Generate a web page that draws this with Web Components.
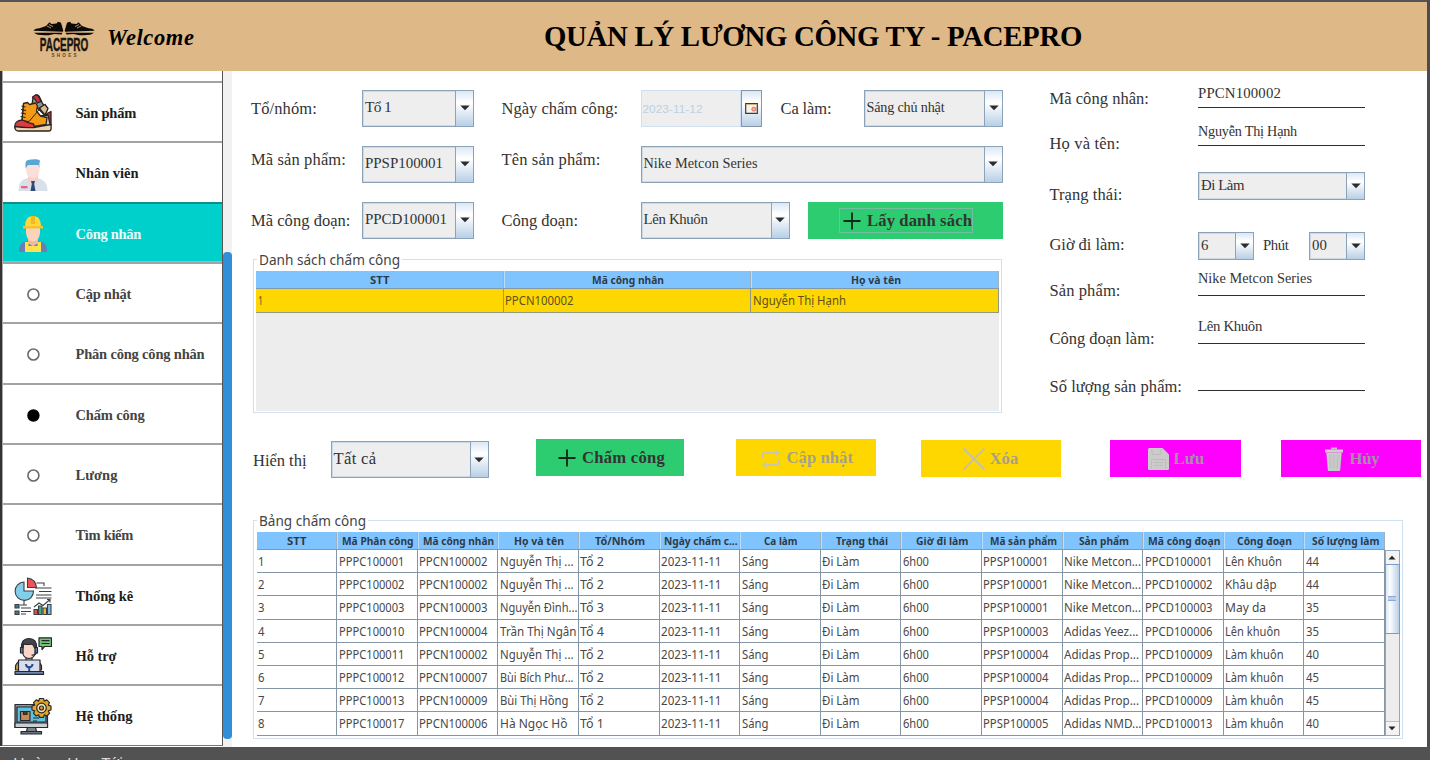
<!DOCTYPE html>
<html lang="vi">
<head>
<meta charset="utf-8">
<title>Quản lý lương công ty - PacePro</title>
<style>
  html, body { margin: 0; height: 100%; overflow: hidden; background: #4c4c4e; }
  body { font-family: "Liberation Serif", "Times New Roman", serif; color: #333; }
</style>
</head>
<body>
<pp-app></pp-app>
<script>
const METRICS = {
  serif: { family: '"Liberation Serif", "Times New Roman", serif', a: .891, d: .216 },
  sans: { family: '"Noto Sans", "Open Sans", sans-serif', a: 1.069, d: .293 },
  arial: { family: '"Liberation Sans", Arial, sans-serif', a: .905, d: .212 }
};

/* Single line of text: s = size, w = measured width, by = baseline below the container's top. */
class FitText extends HTMLElement {
  connectedCallback() {
    if (this.shadowRoot) return;
    const f = this.getAttribute('f') || 'serif', m = METRICS[f];
    const s = parseFloat(this.getAttribute('s') || 16.5);
    const w = parseFloat(this.getAttribute('w') || 0);
    const by = this.getAttribute('by');
    const weight = this.getAttribute('wt') || 400;
    const A = Math.round(m.a * s), D = Math.round(m.d * s), L = A + D;
    this.attachShadow({ mode: 'open' }).innerHTML = `<style>
      :host { display: block; flex: none; height: ${L}px; ${by ? `margin-top: ${Math.round(parseFloat(by) - A)}px;` : ''} }
      span { display: inline-block; white-space: pre; vertical-align: top; transform-origin: 0 50%;
        font: ${this.hasAttribute('it') ? 'italic' : 'normal'} ${weight} ${s}px/${L}px ${m.family}; }
    </style><span><slot></slot></span>`;
    if (!w) return;
    const span = this.shadowRoot.querySelector('span');
    const nat = span.getBoundingClientRect().width;
    this.style.width = w + 'px';
    if (!nat) return;
    if (f === 'sans') span.style.transform = `scaleX(${w / nat})`;
    else span.style.letterSpacing = (w - nat) / Math.max(1, this.textContent.length) + 'px';
  }
}
customElements.define('fit-text', FitText);

/* Swing-like combo box. */
class PpCombo extends HTMLElement {
  connectedCallback() {
    if (this.shadowRoot) return;
    const g = n => this.getAttribute(n);
    this.attachShadow({ mode: 'open' }).innerHTML = `<style>
      :host { display: flex; flex: none; box-sizing: border-box; width: ${g('w')}px; height: ${g('h') || 37}px;
        border: 1px solid #8ba2b8; background: #eee; box-shadow: inset 0 0 0 1px #ccd9e6; }
      .v { flex: 1; display: flex; padding-left: 2px; min-width: 0; }
      .b { width: 17px; border-left: 1px solid #8ba2b8; display: flex; align-items: center; justify-content: center;
        background: linear-gradient(#dbe7f4, #fff 32%, #f4f8fc 45%, #b8cfe5); }
    </style>
    <div class="v"><fit-text by="${g('by')}" s="${g('s')}" w="${g('tw')}">${this.textContent}</fit-text></div>
    <div class="b"><svg width="10" height="6" viewBox="0 0 10 6"><path d="M.3.6h9.4L5 5.3z" fill="#2c2c2c"/></svg></div>`;
  }
}
customElements.define('pp-combo', PpCombo);

const GLYPHS = {
  plus: '<svg width="18" height="18" viewBox="0 0 18 18"><path d="M9 .5v17M.5 9h17" stroke="#12261a" stroke-width="1.8"/></svg>',
  loop: '<svg width="20" height="20" viewBox="0 0 20 20" fill="none" stroke="#c9c6b0" stroke-width="2.100"><path d="M2 9.500V5q0-1 1-1h14M18 10.500v4.500q0 1-1 1H3"/><path d="M14.500.500 18.800 4l-4.300 3.500zM5.500 12.500 1.200 16l4.300 3.500z" fill="#c9c6b0" stroke="none"/></svg>',
  cross: '<svg width="24" height="24" viewBox="0 0 24 24"><path d="M1.500 1.500 22.500 22.500M22.500 1.500 1.500 22.500" stroke="#c6c0a8" stroke-width="2"/></svg>',
  save: '<svg width="21" height="22" viewBox="0 0 21 22"><path d="M1.500 0H14.500L21 6.500V20.500Q21 22 19.500 22H1.500Q0 22 0 20.500V1.500Q0 0 1.500 0Z" fill="#cbcbcb"/><path d="M4 1v5.500h9V1M3.500 21v-9.500h14V21M6 14.500h9M6 17.500h9" fill="none" stroke="#bdb6bd" stroke-width=".8"/></svg>',
  bin: '<svg width="18" height="24" viewBox="0 0 18 24"><path d="M6 1.500h6" stroke="#c5bdc5" stroke-width="2"/><path d="M0 2.500h18v3H0z" fill="#cfcfcf"/><path d="M1.300 5.500h15.400L15.200 23q-.1 1-1 1H3.800q-.9 0-1-1z" fill="#c9c9c9"/><path d="M5 8l.7 13M9 8v13M13 8l-.7 13" stroke="#bdb6bd" stroke-width=".8"/></svg>'
};

/* Flat button: width, background, glyph, text; px/gap give the inner left padding and icon gap. */
class PpButton extends HTMLElement {
  connectedCallback() {
    if (this.shadowRoot) return;
    const g = n => this.getAttribute(n);
    this.attachShadow({ mode: 'open' }).innerHTML = `<style>
      :host { display: flex; flex: none; box-sizing: border-box; width: ${g('w')}px; height: 37px; background: ${g('bg')};
        padding-left: ${g('px')}px; color: ${g('fg') || '#333'}; align-items: flex-start; }
      svg { display: block; flex: none; margin: ${g('iy')}px ${g('gap')}px 0 0; }
      .in { display: flex; ${this.hasAttribute('focus') ? 'margin: 6px 0 0 0; height: 25px; width: 134px; box-sizing: border-box; border: 1px solid #6fbfa0; padding-left: 3px;' : ''} }
    </style><div class="in">${GLYPHS[g('icon')]}<fit-text wt="700" s="16.600" w="${g('tw')}" by="${g('by') || 24}">${this.textContent}</fit-text></div>`;
  }
}
customElements.define('pp-button', PpButton);

/* Titled group box. */
class PpGroup extends HTMLElement {
  connectedCallback() {
    if (this.shadowRoot) return;
    const g = n => this.getAttribute(n);
    this.attachShadow({ mode: 'open' }).innerHTML = `<style>
      :host { display: block; position: relative; box-sizing: border-box; width: ${g('w')}px; height: ${g('h')}px;
        border: 1px solid #cfe0f0; padding: ${g('pad')}; }
      .t { position: absolute; left: 3px; top: -10px; background: #fff; padding: 0 2px; height: 19px; color: #444; }
    </style><div class="t"><fit-text f="sans" s="14" w="${g('tw')}">${g('label')}</fit-text></div><slot></slot>`;
  }
}
customElements.define('pp-group', PpGroup);

/* Grid of cells; columns arrive as [title, width], rows as [text, width]. */
class PpTable extends HTMLElement {
  connectedCallback() {
    if (this.shadowRoot) return;
    const d = DATA[this.getAttribute('data')];
    const cols = `grid-template-columns: repeat(${d.head.length}, minmax(0, 1fr));`;
    this.attachShadow({ mode: 'open' }).innerHTML = `<style>
      :host { display: block; width: ${d.width}px; }
      .h { display: grid; ${cols} height: 18px; background: #80c4ff; border-bottom: 1px solid #8298ab; box-sizing: border-box; }
      .h > div { display: flex; justify-content: center; padding-left: 1.500px; border-right: 1px solid #9fb0bf; border-left: 1px solid #b9defc; color: #2d3b48; min-width: 0; }
      .h > div:first-child { border-left: 0; }
      .r { display: grid; ${cols} height: ${d.rowH}px; box-sizing: border-box; background: ${d.bg}; }
      .r > div { display: flex; border-right: 1px solid ${d.line}; border-bottom: 1px solid ${d.line}; padding-left: 1.500px; min-width: 0; color: ${d.fg}; }
    </style>
    <div class="h">${d.head.map(([t, w], i) => `<div><fit-text f="sans" wt="700" s="11.200" by="13" w="${w}">${t}</fit-text></div>`).join('')}</div>
    ${d.rows.map(r => `<div class="r">${r.map(([t, w]) => `<div><fit-text f="sans" s="12" by="16" w="${w}">${t}</fit-text></div>`).join('')}</div>`).join('')}`;
  }
}
const row = (n, pc, cn, name, nw, to, sp, sn, sw, cd, cong, cw, q) => [[n, 6.5], ['PPPC' + pc, 65.5], ['PPCN' + cn, 68.5], [name, nw], ['Tổ ' + to, 24],
  ['2023-11-11', 60.5], ['Sáng', 26.5], ['Đi Làm', 37.5], ['6h00', 26], ['PPSP' + sp, 65.5], [sn, sw], ['PPCD' + cd, 67.5], [cong, cw], [q, 13]];
const DATA = {
  list: { width: 743, rowH: 23.5, bg: '#ffd700', line: '#8f9a80', fg: '#5c5220',
    head: [['STT', 19.5], ['Mã công nhân', 72], ['Họ và tên', 50]],
    rows: [[['1', 5], ['PPCN100002', 68.5], ['Nguyễn Thị Hạnh', 93]]] },
  board: { width: 1128.5, rowH: 23.19, bg: '#fff', line: '#8596a6', fg: '#484848',
    head: [['STT', 19.5], ['Mã Phân công', 71.5], ['Mã công nhân', 71], ['Họ và tên', 50], ['Tổ/Nhóm', 50], ['Ngày chấm c...', 73.5], ['Ca làm', 33.5], ['Trạng thái', 52],
      ['Giờ đi làm', 52.5], ['Mã sản phẩm', 67], ['Sản phẩm', 50], ['Mã công đoạn', 72.5], ['Công đoạn', 55], ['Số lượng làm', 67.5]],
    rows: [
      row('1', '100001', '100002', 'Nguyễn Thị ...', 73.5, 2, '100001', 'Nike Metcon...', 77, '100001', 'Lên Khuôn', 57, '44'),
      row('2', '100002', '100002', 'Nguyễn Thị ...', 73.5, 2, '100001', 'Nike Metcon...', 77, '100002', 'Khâu dập', 51.5, '44'),
      row('3', '100003', '100003', 'Nguyễn Đình...', 77.5, 3, '100001', 'Nike Metcon...', 77, '100003', 'May da', 41, '35'),
      row('4', '100010', '100004', 'Trần Thị Ngân', 76.5, 4, '100003', 'Adidas Yeez...', 74.5, '100006', 'Lên khuôn', 55, '35'),
      row('5', '100011', '100002', 'Nguyễn Thị ...', 73.5, 2, '100004', 'Adidas Prop...', 75, '100009', 'Làm khuôn', 58.5, '40'),
      row('6', '100012', '100007', 'Bùi Bích Phư...', 73.5, 2, '100004', 'Adidas Prop...', 75, '100009', 'Làm khuôn', 58.5, '45'),
      row('7', '100013', '100009', 'Bùi Thị Hồng', 68.5, 2, '100004', 'Adidas Prop...', 75, '100009', 'Làm khuôn', 58.5, '45'),
      row('8', '100017', '100006', 'Hà Ngọc Hồ', 67.5, 1, '100005', 'Adidas NMD...', 77.5, '100013', 'Làm khuôn', 58.5, '40')
    ] }
};
customElements.define('pp-table', PpTable);

const ICONS = {
  shoes: `<svg width="38" height="38" viewBox="0 0 38 38" stroke="#2b2420" stroke-width="1.300" stroke-linejoin="round">
    <path d="M19 3.500 22.500.8q2.500 0 3.500 3.200l2.500 5.500L33.500 15l-3 6-7-7-5.500-3.500z" fill="#8f9298"/><path d="M18.500 3 22 .8q2.500 0 3.500 3.200l1.500 3.500-3.500 1.500q-2-4-5-6z" fill="#cc2f3c"/>
    <path d="M25 14l6-3.500 3 4-3 6.500z" fill="#d8bd95"/>
    <path d="M33 19.500l4-2v13l-8 2z" fill="#c62f3b"/><path d="M26 22l8-1 2.500 11-9 1z" fill="#c6cad0"/>
    <path d="M9.500 9.500l4-1 2 2 6-1.500 2 3-1 5 4 5 6.500 1.500-1 7-12 2L8 26.500z" fill="#f59a14"/>
    <path d="M9.500 9.500 8 26.500l7 1 12-14" fill="none" stroke-width="1"/>
    <path d="M7.500 12l4 1M7 15.500l5 1M7 19l5 1M6.500 22.500l5 1" stroke-width="1.200"/>
    <path d="M1 33.500q-1-7 7.500-7.500 5 3 11 4l1.500 4.500z" fill="#e0393f"/>
    <path d="M.8 32.500q9 1.500 19 1l8-1.500 9.300-1.500v4q0 2.500-2.500 2.500H4.500q-3.700 0-3.700-4.500z" fill="#ecd3b2"/></svg>`,
  staff: `<svg width="38" height="38" viewBox="0 0 38 38"><path d="M4.500 37q0-9 5-11.500l9-3 9 3q6 2.500 6 11.500z" fill="#d9e0ec"/><path d="M14 20h10v7l-5 3-5-3z" fill="#f6cfc8"/>
    <path d="M12 10q0-5 7-5t6.500 5v6q-.5 8-6.500 8.500Q12.500 24 12 16z" fill="#fbe0da"/>
    <path d="M11.500 14.500V9Q12 5.800 16 5.800q9-1.500 10 1-1.300 3-.5 7.500L24.500 11H14z" fill="#58a6d3"/>
    <path d="M17 27h4l-.8 3 1.300 7h-5l1.300-7z" fill="#2f4a72"/><path d="M7 32h6.500v2.300H7z" fill="#e8677b"/></svg>`,
  worker: `<svg width="38" height="38" viewBox="0 0 38 38"><path d="M5 37q0-9 5-10l9-3 9 3q5 1 5 10z" fill="#6b7db5"/><path d="M14 22h10v6l-5 3.500-5-3.500z" fill="#f0b99c"/>
    <path d="M12 12h14v6q-1 8-7 8.500-6-.5-7-8.500z" fill="#fbd3bb"/><path d="M11 27h3.500v4h9v-4H27v10H11z" fill="#ffe04d"/>
    <path d="M11 11Q11 2.500 17 1.200h4Q27 2.500 27 11z" fill="#ffd738"/><path d="M17 1h4v8h-4z" fill="#f5b722"/><path d="M9 11h20v2.500H9z" fill="#f7c12d"/></svg>`,
  ring: `<svg width="38" height="38" viewBox="0 0 38 38"><circle cx="19.400" cy="19.500" r="5.500" fill="#fff" stroke="#6a6a6a" stroke-width="1.600"/></svg>`,
  dot: `<svg width="38" height="38" viewBox="0 0 38 38"><circle cx="19.400" cy="19.500" r="6.200" fill="#000"/></svg>`,
  stats: `<svg width="38" height="38" viewBox="0 0 38 38" stroke="#3c3f45" stroke-width="1.100"><path d="M10 5v9h9.500A9.200 9.200 0 1 1 10 5z" fill="#83cfea"/><path d="M13.500 1q8 1 9 9.500h-9z" fill="#f0525a"/>
    <path d="M22.500 6H30v3M21 11h16.500M25 14.500h12.500M22 18h15.500M22 21h15.500M7 28h6M10 23.500V28h-4M7 31h10M7 34.500h10M7 37h5M20 30l5-4 4 2.500 6.500-5.500M33 22.500h3v3" fill="none"/>
    <path d="M1 27.500h4v3.500H1zM1 34h4v3.500H1z" fill="#417a86"/><path d="M20 32.500h3.500v5H20z" fill="#e2505c"/><path d="M24.500 29h3.500v8.500h-3.500z" fill="#37b67a"/><path d="M29 31h3.500v6.500H29z" fill="#e9b83d"/><path d="M33.500 27.500H37v10h-3.500z" fill="#79bfe3"/></svg>`,
  support: `<svg width="38" height="38" viewBox="0 0 38 38" stroke="#25262b" stroke-width="1.200" stroke-linejoin="round"><path d="M1.500 33v-4q1-4 6-5.500h14q5 1.500 6 5.500v4z" fill="#d99c3d"/><path d="M12 19h6v5l-3 2-3-2z" fill="#efb9a4"/>
    <path d="M8.500 9q1-4 6.500-4t6.500 4v6q-1 6.500-6.500 6.500T8.500 15z" fill="#fbd6c7"/><path d="M7.500 11Q7 1.500 15 1.500T22.500 11h-2q-.5-3-3-4-4 1-8 0L9 11z" fill="#45464c"/>
    <path d="M6.500 10.500h2.500v5.500H6.500zM21 10.500h2.500v5.500H21z" fill="#4f86b8"/><path d="M22.500 16q-1 2.500-5 2" fill="none"/>
    <path d="M4.500 23h21.500v12H4.500z" fill="#d7ddee"/><path d="M1 34.500h28.500v2.800H1z" fill="#6e87b4"/><path d="M12 27q0 3 3 3.500 3.500-.5 3.500-3.500M15.200 29v5" fill="none" stroke="#2f4c88" stroke-width="2"/>
    <path d="M25 .800h12.500v8.700H30.500l-2.500 3v-3H25z" fill="#74c27a"/><path d="M27.500 3.700h8M27.500 6.500h8" fill="none"/></svg>`,
  system: `<svg width="38" height="38" viewBox="0 0 38 38" stroke="#26292f" stroke-width="1.200" stroke-linejoin="round"><path d="M1 7.500h32.500v23H1z" fill="#8c959e"/><path d="M3 10h29v15H3z" fill="#5bc2df"/><path d="M1 26h32.500v4.500H1z" fill="#c9ced4"/>
    <path d="M6.500 14.500h9.500v9H6.500z" fill="#c58a58"/><path d="M9.500 14.500h3.500v3H9.500z" fill="#5b3a26"/><path d="M19 21h6M19 24h4" stroke-width="1"/>
    <path d="M13.500 30.500h8l1 4h-10z" fill="#7b848d"/><path d="M7 34.500h20.500V37H7z" fill="#6a727b"/>
    <path d="M25.500 1.500h4l.8 2.600 2.500-1.200 2.700 2.700-1.200 2.500 2.700.9v4l-2.700.8 1.200 2.500-2.700 2.700-2.500-1.200-.8 2.600h-4l-.8-2.600-2.500 1.200-2.700-2.700 1.200-2.500-2.700-.8V9l2.700-.9-1.200-2.500 2.700-2.700 2.500 1.200z" fill="#e5a524"/><circle cx="27.500" cy="11" r="4.800" fill="#f6e0ae"/><circle cx="27.500" cy="11" r="2" fill="#e5a524"/></svg>`
};

class PpItem extends HTMLElement {
  connectedCallback() {
    if (this.shadowRoot) return;
    const on = this.hasAttribute('active'), sub = this.hasAttribute('sub');
    this.attachShadow({ mode: 'open' }).innerHTML = `<style>
      :host { display: flex; box-sizing: border-box; height: 60.33px; flex: none; border-top: 2px solid ${on ? '#0a8f8c' : '#a3a3a3'};
        background: ${on ? '#00d0cb' : '#fff'}; color: ${on ? '#e9fdfc' : sub ? '#444' : '#1c1c1c'}; ${on ? 'box-shadow: inset 0 -1px #00fffb;' : ''} }
      svg { flex: none; display: block; margin: 11px 24px 0 10.500px; }
    </style>${ICONS[this.getAttribute('icon')]}<fit-text wt="700" s="14.500" by="35" w="${this.getAttribute('tw')}">${this.textContent}</fit-text>`;
  }
}
customElements.define('pp-item', PpItem);

class PpSidebar extends HTMLElement {
  constructor() {
    super();
    this.attachShadow({ mode: 'open' }).innerHTML = `<style>
      :host { display: flex; width: 232px; flex: none; background: #fff; }
      nav { width: 220.500px; height: 675px; box-sizing: border-box; border-left: 1px solid #aaa; border-right: 1px solid #555; border-bottom: 1px solid #777;
        margin-left: 2px; padding-top: 10px; overflow: hidden; display: flex; flex-direction: column; box-shadow: -2px 0 #333; }
      .track { width: 9px; margin-left: .500px; background: #f1f1f1; padding-top: 181px; box-sizing: border-box; }
      .thumb { height: 486.500px; border-radius: 4px; background: #2f8fd9; }
    </style>
    <nav>
      <pp-item icon="shoes" tw="60.500">Sản phẩm</pp-item>
      <pp-item icon="staff" tw="63">Nhân viên</pp-item>
      <pp-item icon="worker" tw="65.500" active>Công nhân</pp-item>
      <pp-item icon="ring" tw="55.500" sub>Cập nhật</pp-item>
      <pp-item icon="ring" tw="129" sub>Phân công công nhân</pp-item>
      <pp-item icon="dot" tw="69" sub>Chấm công</pp-item>
      <pp-item icon="ring" tw="42" sub>Lương</pp-item>
      <pp-item icon="ring" tw="57.500" sub>Tìm kiếm</pp-item>
      <pp-item icon="stats" tw="57.500">Thống kê</pp-item>
      <pp-item icon="support" tw="41">Hỗ trợ</pp-item>
      <pp-item icon="system" tw="57">Hệ thống</pp-item>
    </nav>
    <div class="track"><div class="thumb"></div></div>`;
  }
}
customElements.define('pp-sidebar', PpSidebar);

class PpHeader extends HTMLElement {
  constructor() {
    super();
    this.attachShadow({ mode: 'open' }).innerHTML = `<style>
      :host { display: flex; height: 69px; flex: none; background: #deb887; color: #000; }
      .logo { flex: none; margin: 19px 12px 0 33px; display: block; }
    </style>
    <svg class="logo" width="62" height="37" viewBox="0 0 62 37">
      <path id="s" d="M.5 9.800q1-2.300 6-2.600L13 5l3.500-3.700 2 1.700 5-.5 1.500-1.700 3 1 1.800 6.200q.8 1 .2 2.800z" fill="#0c0a08"/>
      <path d="M61.500 9.800q-1-2.300-6-2.600L49 5l-3.500-3.700-2 1.700-5-.5L37 .800l-3 1-1.800 6.200q-.8 1-.2 2.800z" fill="#0c0a08"/>
      <path d="M1 11.800h28.500l-1 1.800-7-.6-6 1.200Q4 14.800 1 11.800zM61 11.800H32.500l1 1.800 7-.6 6 1.200q11.500.6 14.500-2.400z" fill="#0c0a08"/>
      <path d="M14 5l4 2M16 3.600l4 2M48 5l-4 2M46 3.600l-4 2" stroke="#deb887" stroke-width=".8"/>
      <text x="6.800" y="30.300" font-family="Liberation Sans" font-weight="700" font-size="19" fill="#1a150f" stroke="#1a150f" stroke-width=".5" textLength="48.500" lengthAdjust="spacingAndGlyphs">PACEPRO</text>
      <text x="18.500" y="36.300" font-family="Liberation Sans" font-weight="700" font-size="4.600" fill="#5a4528" textLength="25">SHOES</text>
    </svg>
    <fit-text it wt="700" s="22.500" w="87.500" by="43">Welcome</fit-text>
    <div style="width:349.500px;flex:none"></div>
    <fit-text wt="700" s="28.800" w="538" by="43.600">QUẢN LÝ LƯƠNG CÔNG TY - PACEPRO</fit-text>`;
  }
}
customElements.define('pp-header', PpHeader);

class PpDate extends HTMLElement {
  constructor() {
    super();
    this.attachShadow({ mode: 'open' }).innerHTML = `<style>
      :host { display: flex; flex: none; width: 121px; height: 37px; }
      .v { box-sizing: border-box; width: 100px; border: 1px solid #cddff0; background: #eee; display: flex; padding-left: 1px; color: #bcd0e4; }
      .b { box-sizing: border-box; width: 21px; border: 1px solid #8496a8; background: linear-gradient(#dbe7f4, #fff 32%, #f4f8fc 45%, #b8cfe5); display: flex; align-items: center; justify-content: center; }
    </style><div class="v"><fit-text f="arial" s="11.800" w="60" by="22">2023-11-12</fit-text></div>
    <div class="b"><svg width="13" height="11" viewBox="0 0 13 11"><path d="M.7.700h11.600v9.600H.7z" fill="#f6f3ea" stroke="#3a3a3a" stroke-width="1.200"/><path d="M1.300 1.500h10.400" stroke="#d9b36b" stroke-width="1"/><circle cx="8.800" cy="6.200" r="2" fill="#f2b0a8" stroke="#e0574b" stroke-width=".8"/></svg></div>`;
  }
}
customElements.define('pp-date', PpDate);

class PpFilter extends HTMLElement {
  constructor() {
    super();
    this.attachShadow({ mode: 'open' }).innerHTML = `<style>
      :host { display: grid; box-sizing: border-box; grid-template-columns: 111px 139.500px 139px 362px; grid-auto-rows: 37px; row-gap: 19px; padding: 18.500px 0 0 19px; }
      .c { display: flex; align-items: flex-start; }
    </style>
    <div class="c"><fit-text w="66" by="24">Tổ/nhóm:</fit-text></div>
    <div class="c"><pp-combo w="112" s="15.500" tw="26" by="21">Tổ 1</pp-combo></div>
    <div class="c"><fit-text w="116.500" by="24">Ngày chấm công:</fit-text></div>
    <div class="c"><pp-date></pp-date><fit-text style="margin-left:19px;margin-right:32px" w="51" by="24">Ca làm:</fit-text><pp-combo w="139.500" s="14.200" tw="78" by="21">Sáng chủ nhật</pp-combo></div>
    <div class="c"><fit-text w="95" by="19">Mã sản phẩm:</fit-text></div>
    <div class="c"><pp-combo w="112" s="15" tw="78" by="21">PPSP100001</pp-combo></div>
    <div class="c"><fit-text w="99" by="19">Tên sản phẩm:</fit-text></div>
    <div class="c"><pp-combo w="362" s="14.300" tw="114" by="21">Nike Metcon Series</pp-combo></div>
    <div class="c"><fit-text w="99.500" by="24">Mã công đoạn:</fit-text></div>
    <div class="c"><pp-combo w="112" s="15" tw="82" by="21">PPCD100001</pp-combo></div>
    <div class="c"><fit-text w="76.500" by="24">Công đoạn:</fit-text></div>
    <div class="c"><pp-combo w="149" s="14.800" tw="64" by="21">Lên Khuôn</pp-combo><pp-button style="margin-left:18.500px" w="194.500" bg="#2ecc71" px="30.500" icon="plus" iy="3" gap="6.500" tw="105" by="17" focus>Lấy danh sách</pp-button></div>`;
  }
}
customElements.define('pp-filter', PpFilter);

/* One label/value row of the details panel. */
class PpField extends HTMLElement {
  constructor() {
    super();
    this.attachShadow({ mode: 'open' });
  }
  connectedCallback() {
    const g = n => this.getAttribute(n);
    this.shadowRoot.innerHTML = `<style>
      :host { display: grid; grid-template-columns: 148.500px 167px; height: ${g('h')}px; align-items: start; flex: none; }
      .u { box-sizing: border-box; height: ${g('line')}px; border-bottom: 1px solid #2f2f2f; }
      .u, .l, .p { display: flex; align-items: flex-start; }
      .p { padding-top: ${g('top')}px; }
    </style><div class="l"><fit-text w="${g('lw')}" by="${g('lb')}">${g('label')}</fit-text></div><div class="${g('line') ? 'u' : 'p'}"><slot></slot></div>`;
  }
}
customElements.define('pp-field', PpField);

class PpDetails extends HTMLElement {
  constructor() {
    super();
    this.attachShadow({ mode: 'open' }).innerHTML = `<style>:host { display: flex; flex-direction: column; }</style>
    <pp-field h="46" label="Mã công nhân:" lw="99.500" lb="33" line="37"><fit-text s="14.800" w="83" by="27">PPCN100002</fit-text></pp-field>
    <pp-field h="42" label="Họ và tên:" lw="70.500" lb="32" line="29"><fit-text s="14.200" w="99" by="19">Nguyễn Thị Hạnh</fit-text></pp-field>
    <pp-field h="52" label="Trạng thái:" lw="73" lb="41" top="13"><pp-combo w="167" h="28" s="14.800" tw="43" by="17">Đi Làm</pp-combo></pp-field>
    <pp-field h="54" label="Giờ đi làm:" lw="75" lb="39" top="21"><pp-combo w="56" h="28" s="14.800" tw="8" by="17">6</pp-combo><fit-text style="margin-left:9px;margin-right:20.500px" s="14.800" w="25.500" by="18">Phút</fit-text><pp-combo w="56" h="28" s="14.800" tw="15" by="17">00</pp-combo></pp-field>
    <pp-field h="40" label="Sản phẩm:" lw="71" lb="31" line="31"><fit-text s="14.300" w="114" by="18">Nike Metcon Series</fit-text></pp-field>
    <pp-field h="48" label="Công đoạn làm:" lw="105" lb="39" line="39"><fit-text s="14.800" w="64" by="26">Lên Khuôn</fit-text></pp-field>
    <pp-field h="48" label="Số lượng sản phẩm:" lw="132.500" lb="39" line="38"></pp-field>`;
  }
}
customElements.define('pp-details', PpDetails);

class PpActions extends HTMLElement {
  constructor() {
    super();
    this.attachShadow({ mode: 'open' }).innerHTML = `<style>
      :host { display: flex; align-items: flex-start; padding-left: 21px; }
    </style>
    <fit-text w="53.500" by="27">Hiển thị</fit-text>
    <pp-combo style="margin:2px 47px 0 24px" w="158" s="16.600" tw="43" by="22">Tất cả</pp-combo>
    <pp-button w="148.500" bg="#2ecc71" px="22" icon="plus" iy="10" gap="6.500" tw="83">Chấm công</pp-button>
    <pp-button style="margin-left:52px" w="139.500" bg="#ffd700" fg="#a5a08c" px="25" icon="loop" iy="9.500" gap="5.500" tw="66.500">Cập nhật</pp-button>
    <pp-button style="margin:1px 0 0 45px" w="140" bg="#ffd700" fg="#a5a08c" px="41.500" icon="cross" iy="7" gap="3.500" tw="29">Xóa</pp-button>
    <pp-button style="margin:1px 0 0 49.500px" w="130.500" bg="#f0f" fg="#a78fa7" px="37.500" icon="save" iy="8" gap="5" tw="31">Lưu</pp-button>
    <pp-button style="margin:1px 0 0 40.500px" w="139.500" bg="#f0f" fg="#a78fa7" px="44" icon="bin" iy="7" gap="6.500" tw="30">Hủy</pp-button>`;
  }
}
customElements.define('pp-actions', PpActions);

class PpScroll extends HTMLElement {
  constructor() {
    super();
    this.attachShadow({ mode: 'open' }).innerHTML = `<style>
      :host { display: flex; flex-direction: column; box-sizing: border-box; width: 14.500px; height: 186px; margin-top: 17.500px; background: #ededed; border: 1px solid #94a6b8; }
      .b { height: 13px; display: flex; align-items: center; justify-content: center; background: #f3f3f3; flex: none; }
      .t { height: 68px; margin: 0 -1px; border: 1px solid #7b9ccb; background: linear-gradient(90deg, #dbe7f4, #fdfeff 30%, #b8cfe5); display: flex; align-items: center; justify-content: center; flex: none; }
      .g { width: 8px; height: 5px; border-top: 1px solid #8aa8d3; border-bottom: 1px solid #8aa8d3; background: #bccfe9; box-sizing: border-box; }
      .s { flex: 1; }
      .e { border-top: 1px solid #b5bfca; }
    </style>
    <div class="b"><svg width="8" height="5" viewBox="0 0 8 5"><path d="M.5 4.500h7L4 .800z" fill="#222"/></svg></div>
    <div class="t"><div class="g"></div></div><div class="s"></div>
    <div class="b e"><svg width="8" height="5" viewBox="0 0 8 5"><path d="M.5.500h7L4 4.200z" fill="#222"/></svg></div>`;
  }
}
customElements.define('pp-scroll', PpScroll);

class PpApp extends HTMLElement {
  constructor() {
    super();
    this.attachShadow({ mode: 'open' }).innerHTML = `<style>
      :host { display: flex; flex-direction: column; width: 1430px; height: 760px; overflow: hidden; }
      .win { display: flex; flex-direction: column; width: 1427px; height: 747px; flex: none; box-sizing: border-box; border-top: 2px solid #55525a; background: #fff; }
      .body { display: flex; height: 676px; }
      main { width: 1195px; flex: none; display: flex; flex-direction: column; }
      .top { display: flex; height: 188px; }
      .top pp-filter { width: 798.500px; flex: none; }
      .top pp-details { flex: none; }
      .view { height: 98px; width: 743px; background: #ededed; }
      .groups { padding-left: 21px; }
      .board { display: flex; }
      pp-actions { margin-top: 26px; height: 80.500px; flex: none; }
      .foot { height: 13px; background: #525252; color: #ddd; overflow: hidden; padding-left: 13px; }
      .foot fit-text { margin-top: 6px; }
    </style>
    <div class="win">
      <pp-header></pp-header>
      <div class="body">
        <pp-sidebar></pp-sidebar>
        <main>
          <div class="top"><pp-filter></pp-filter><div style="width:19px"></div><pp-details></pp-details></div>
          <div class="groups"><pp-group w="748.500" h="154" pad="11px 0 0 2px" label="Danh sách chấm công" tw="141"><pp-table data="list"></pp-table><div class="view"></div></pp-group></div>
          <pp-actions></pp-actions>
          <div class="groups"><pp-group w="1150" h="219" pad="11.500px 0 0 2.500px" label="Bảng chấm công" tw="107"><div class="board"><pp-table data="board"></pp-table><pp-scroll></pp-scroll></div></pp-group></div>
        </main>
      </div>
    </div>
    <div class="foot"><fit-text f="sans" s="14" w="110">Hoàng Hoa Tới</fit-text></div>`;
  }
}
customElements.define('pp-app', PpApp);
</script>
</body>
</html>
